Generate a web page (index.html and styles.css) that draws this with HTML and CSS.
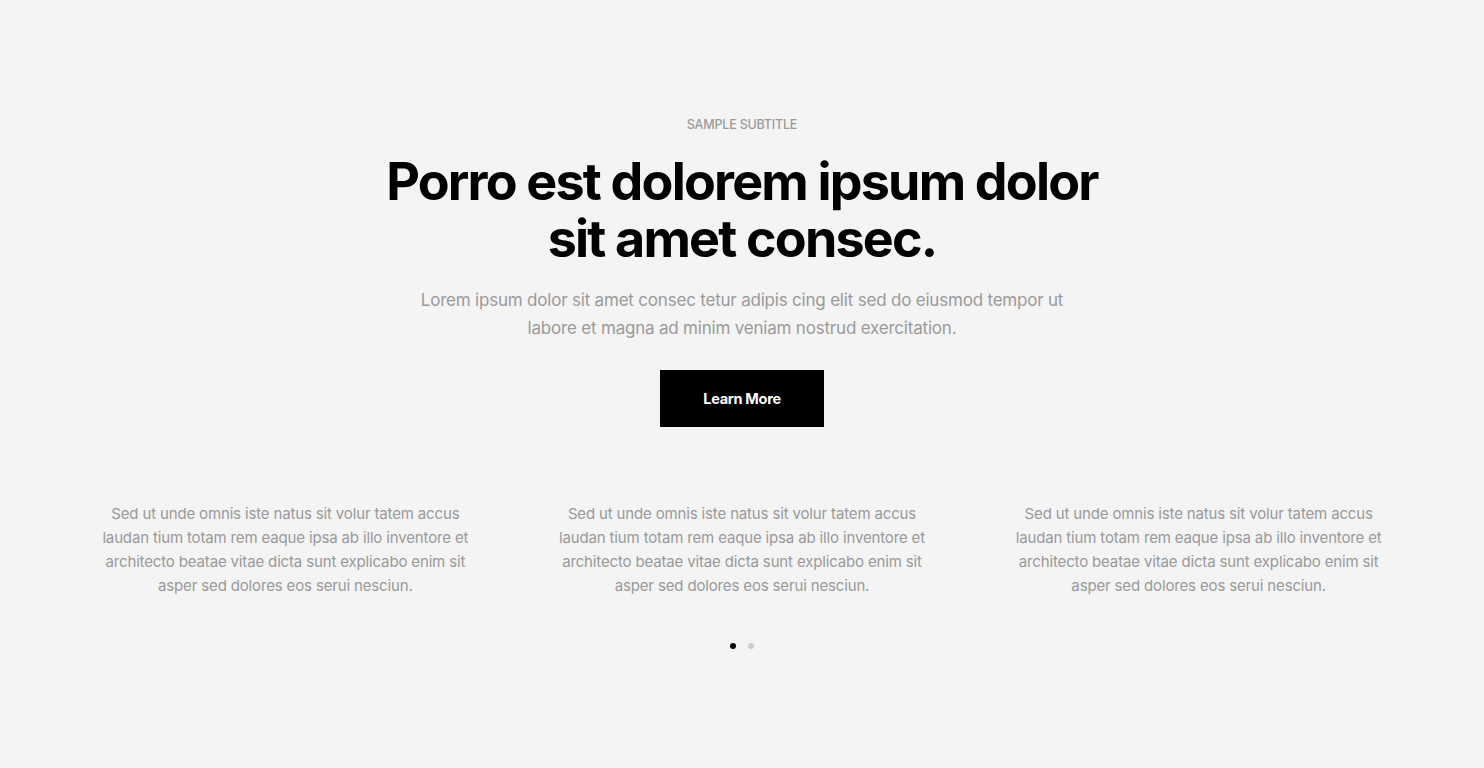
FILE: index.html
```html
<!DOCTYPE html>
<html lang="en">
<head>
<meta charset="utf-8">
<title>Sample</title>
<link rel="stylesheet" href="styles.css">
</head>
<body>
<section class="hero">
  <p class="subtitle">SAMPLE SUBTITLE</p>
  <h1 class="title">Porro est dolorem ipsum dolor<br>sit amet consec.</h1>
  <p class="lead">Lorem ipsum dolor sit amet consec tetur adipis cing elit sed do eiusmod tempor ut labore et magna ad minim veniam nostrud exercitation.</p>
  <a class="btn" href="#">Learn More</a>
</section>
<section class="features">
  <div class="col"><p>Sed ut unde omnis iste natus sit volur tatem accus laudan tium totam rem eaque ipsa ab illo inventore et architecto beatae vitae dicta sunt explicabo enim sit asper sed dolores eos serui nesciun.</p></div>
  <div class="col"><p>Sed ut unde omnis iste natus sit volur tatem accus laudan tium totam rem eaque ipsa ab illo inventore et architecto beatae vitae dicta sunt explicabo enim sit asper sed dolores eos serui nesciun.</p></div>
  <div class="col"><p>Sed ut unde omnis iste natus sit volur tatem accus laudan tium totam rem eaque ipsa ab illo inventore et architecto beatae vitae dicta sunt explicabo enim sit asper sed dolores eos serui nesciun.</p></div>
</section>
<div class="dots">
  <span class="dot active"></span>
  <span class="dot"></span>
</div>
</body>
</html>
```
FILE: styles.css
```css
* { box-sizing: border-box; }
html, body { margin: 0; padding: 0; }
body {
  background: #f4f4f4;
  font-family: Inter, "Noto Sans", sans-serif;
  color: #999;
  height: 768px;
  overflow: hidden;
}
.hero {
  display: flex;
  flex-direction: column;
  align-items: center;
  text-align: center;
  padding-top: 117px;
}
.subtitle {
  margin: 0;
  font-size: 12.5px;
  line-height: 16px;
  color: #9a9a9a;
  font-weight: 500;
  letter-spacing: -0.2px;
}
.title {
  margin: 20px 0 0;
  font-size: 52px;
  line-height: 57px;
  font-weight: 700;
  letter-spacing: -1.8px;
  color: #000;
}
.lead {
  margin: 19px 0 0;
  max-width: 660px;
  font-size: 17px;
  line-height: 28px;
  color: #9a9a9a;
  letter-spacing: -0.2px;
}
.btn {
  margin-top: 28px;
  width: 164px;
  height: 57px;
  display: flex;
  align-items: center;
  justify-content: center;
  background: #000;
  color: #fff;
  font-weight: 700;
  font-size: 14.5px;
  letter-spacing: -0.3px;
  text-decoration: none;
}
.features {
  display: grid;
  grid-template-columns: repeat(3, 1fr);
  margin: 75px 57px 0;
}
.col {
  padding: 0 40px;
  text-align: center;
}
.col p {
  margin: 0;
  font-size: 15px;
  line-height: 24px;
  color: #999;
  letter-spacing: -0.15px;
}
.dots {
  display: flex;
  justify-content: center;
  gap: 12px;
  margin-top: 45px;
}
.dot {
  width: 6px;
  height: 6px;
  border-radius: 50%;
  background: #ccc;
}
.dot.active { background: #000; }
```
